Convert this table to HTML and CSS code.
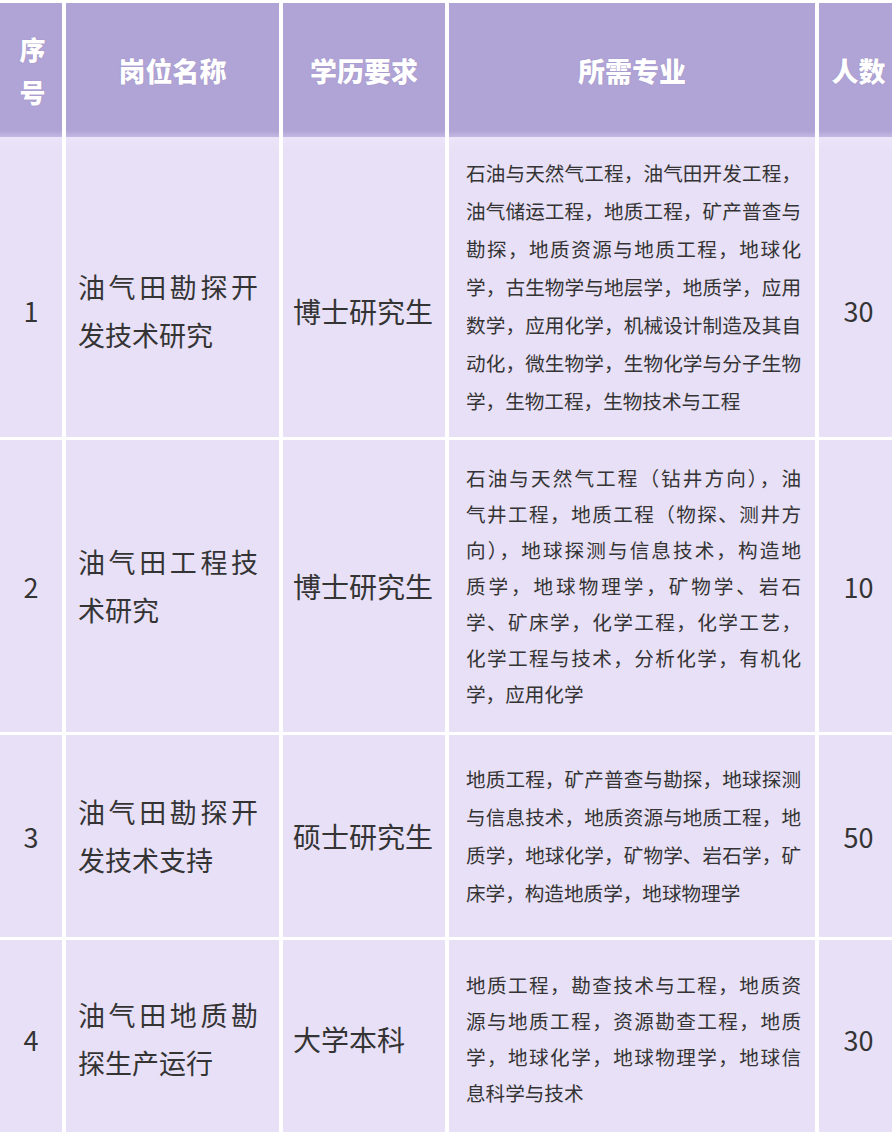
FILE: index.html
```html
<!DOCTYPE html>
<html lang="zh">
<head>
<meta charset="utf-8">
<title>招聘岗位</title>
<link rel="stylesheet" href="styles.css">
</head>
<body>
<div class="table">
  <div class="row head">
    <div class="cell c1"><span class="stack">序<br>号</span></div>
    <div class="cell c2h">岗位名称</div>
    <div class="cell c3h">学历要求</div>
    <div class="cell c4h">所需专业</div>
    <div class="cell c5h">人数</div>
  </div>

  <div class="row r1">
    <div class="cell c1 shift">1</div>
    <div class="cell c2 shift"><div class="txt">油气田勘探开发技术研究</div></div>
    <div class="cell c3 shift">博士研究生</div>
    <div class="cell c4"><div class="txt lh38">
      <span class="ln">石油与天然气工程，油气田开发工程，</span>
      <span class="ln">油气储运工程，地质工程，矿产普查与</span>
      <span class="ln">勘探，地质资源与地质工程，地球化</span>
      <span class="ln">学，古生物学与地层学，地质学，应用</span>
      <span class="ln">数学，应用化学，机械设计制造及其自</span>
      <span class="ln">动化，微生物学，生物化学与分子生物</span>
      <span class="ln end">学，生物工程，生物技术与工程</span>
    </div></div>
    <div class="cell c5 shift">30</div>
  </div>

  <div class="row r2">
    <div class="cell c1">2</div>
    <div class="cell c2"><div class="txt">油气田工程技术研究</div></div>
    <div class="cell c3">博士研究生</div>
    <div class="cell c4"><div class="txt lh36">
      <span class="ln">石油与天然气工程（钻井方向），油</span>
      <span class="ln">气井工程，地质工程（物探、测井方</span>
      <span class="ln">向），地球探测与信息技术，构造地</span>
      <span class="ln">质学，地球物理学，矿物学、岩石</span>
      <span class="ln">学、矿床学，化学工程，化学工艺，</span>
      <span class="ln">化学工程与技术，分析化学，有机化</span>
      <span class="ln end">学，应用化学</span>
    </div></div>
    <div class="cell c5">10</div>
  </div>

  <div class="row r3">
    <div class="cell c1">3</div>
    <div class="cell c2"><div class="txt">油气田勘探开发技术支持</div></div>
    <div class="cell c3">硕士研究生</div>
    <div class="cell c4"><div class="txt lh38">
      <span class="ln">地质工程，矿产普查与勘探，地球探测</span>
      <span class="ln">与信息技术，地质资源与地质工程，地</span>
      <span class="ln">质学，地球化学，矿物学、岩石学，矿</span>
      <span class="ln end">床学，构造地质学，地球物理学</span>
    </div></div>
    <div class="cell c5">50</div>
  </div>

  <div class="row r4">
    <div class="cell c1">4</div>
    <div class="cell c2"><div class="txt">油气田地质勘探生产运行</div></div>
    <div class="cell c3">大学本科</div>
    <div class="cell c4"><div class="txt lh36">
      <span class="ln">地质工程，勘查技术与工程，地质资</span>
      <span class="ln">源与地质工程，资源勘查工程，地质</span>
      <span class="ln">学，地球化学，地球物理学，地球信</span>
      <span class="ln end">息科学与技术</span>
    </div></div>
    <div class="cell c5">30</div>
  </div>
</div>
</body>
</html>
```

FILE: styles.css
```css
html, body {
  margin: 0;
  padding: 0;
  background: #ffffff;
}

body {
  font-family: "Noto Sans CJK SC", "Noto Sans", sans-serif;
  color: #343434;
  overflow: hidden;
}

.table {
  padding-top: 3px;
  display: flex;
  flex-direction: column;
}

.row {
  display: grid;
  grid-template-columns: 62px 213px 162px 366px 73px;
  column-gap: 4px;
}

.row + .row {
  margin-top: 3px;
}

.head + .row {
  margin-top: 0;
}

.cell {
  background: #e8e0f6;
  display: flex;
  align-items: center;
  box-sizing: border-box;
}

/* header */
.head {
  height: 134px;
}

.head .cell {
  background: linear-gradient(#b0a3d5 0%, #b0a3d5 95%, #c3b8e2 100%);
  color: #ffffff;
  font-weight: 900;
  font-size: 27px;
  justify-content: center;
  text-shadow: 0 0 1px rgba(90, 70, 140, 0.35);
}

.head .c1 {
  font-size: 26px;
  padding-left: 3px;
}

.stack {
  display: block;
  line-height: 43px;
  text-align: center;
}

.c5h {
  padding-left: 6px;
}

/* row heights */
.r1 { height: 300px; }
.r2 { height: 292px; }
.r3 { height: 202px; }
.r4 { height: 198px; }

.r1 .cell {
  background: linear-gradient(#ece5fa, #e8e0f6 14px);
}

/* body cells */
.c1 {
  justify-content: center;
  font-size: 27px;
}

.c2 {
  padding: 0 21px 0 12px;
  font-size: 27px;
}

.c2 .txt {
  flex: 1;
  line-height: 48px;
  text-align: justify;
}

.c3 {
  padding-left: 10px;
  font-size: 28px;
}

.c4 {
  padding: 0 14px 0 17px;
  font-size: 19.6px;
}

.c4 .txt {
  flex: 1;
}

.lh38 { line-height: 38px; }
.lh36 { line-height: 36px; }

.ln {
  display: block;
  text-align: justify;
  text-align-last: justify;
}

.ln.end {
  text-align: left;
  text-align-last: left;
}

.c5 {
  justify-content: center;
  padding-left: 6px;
  font-size: 27px;
}

.shift {
  padding-top: 47px;
}
```
